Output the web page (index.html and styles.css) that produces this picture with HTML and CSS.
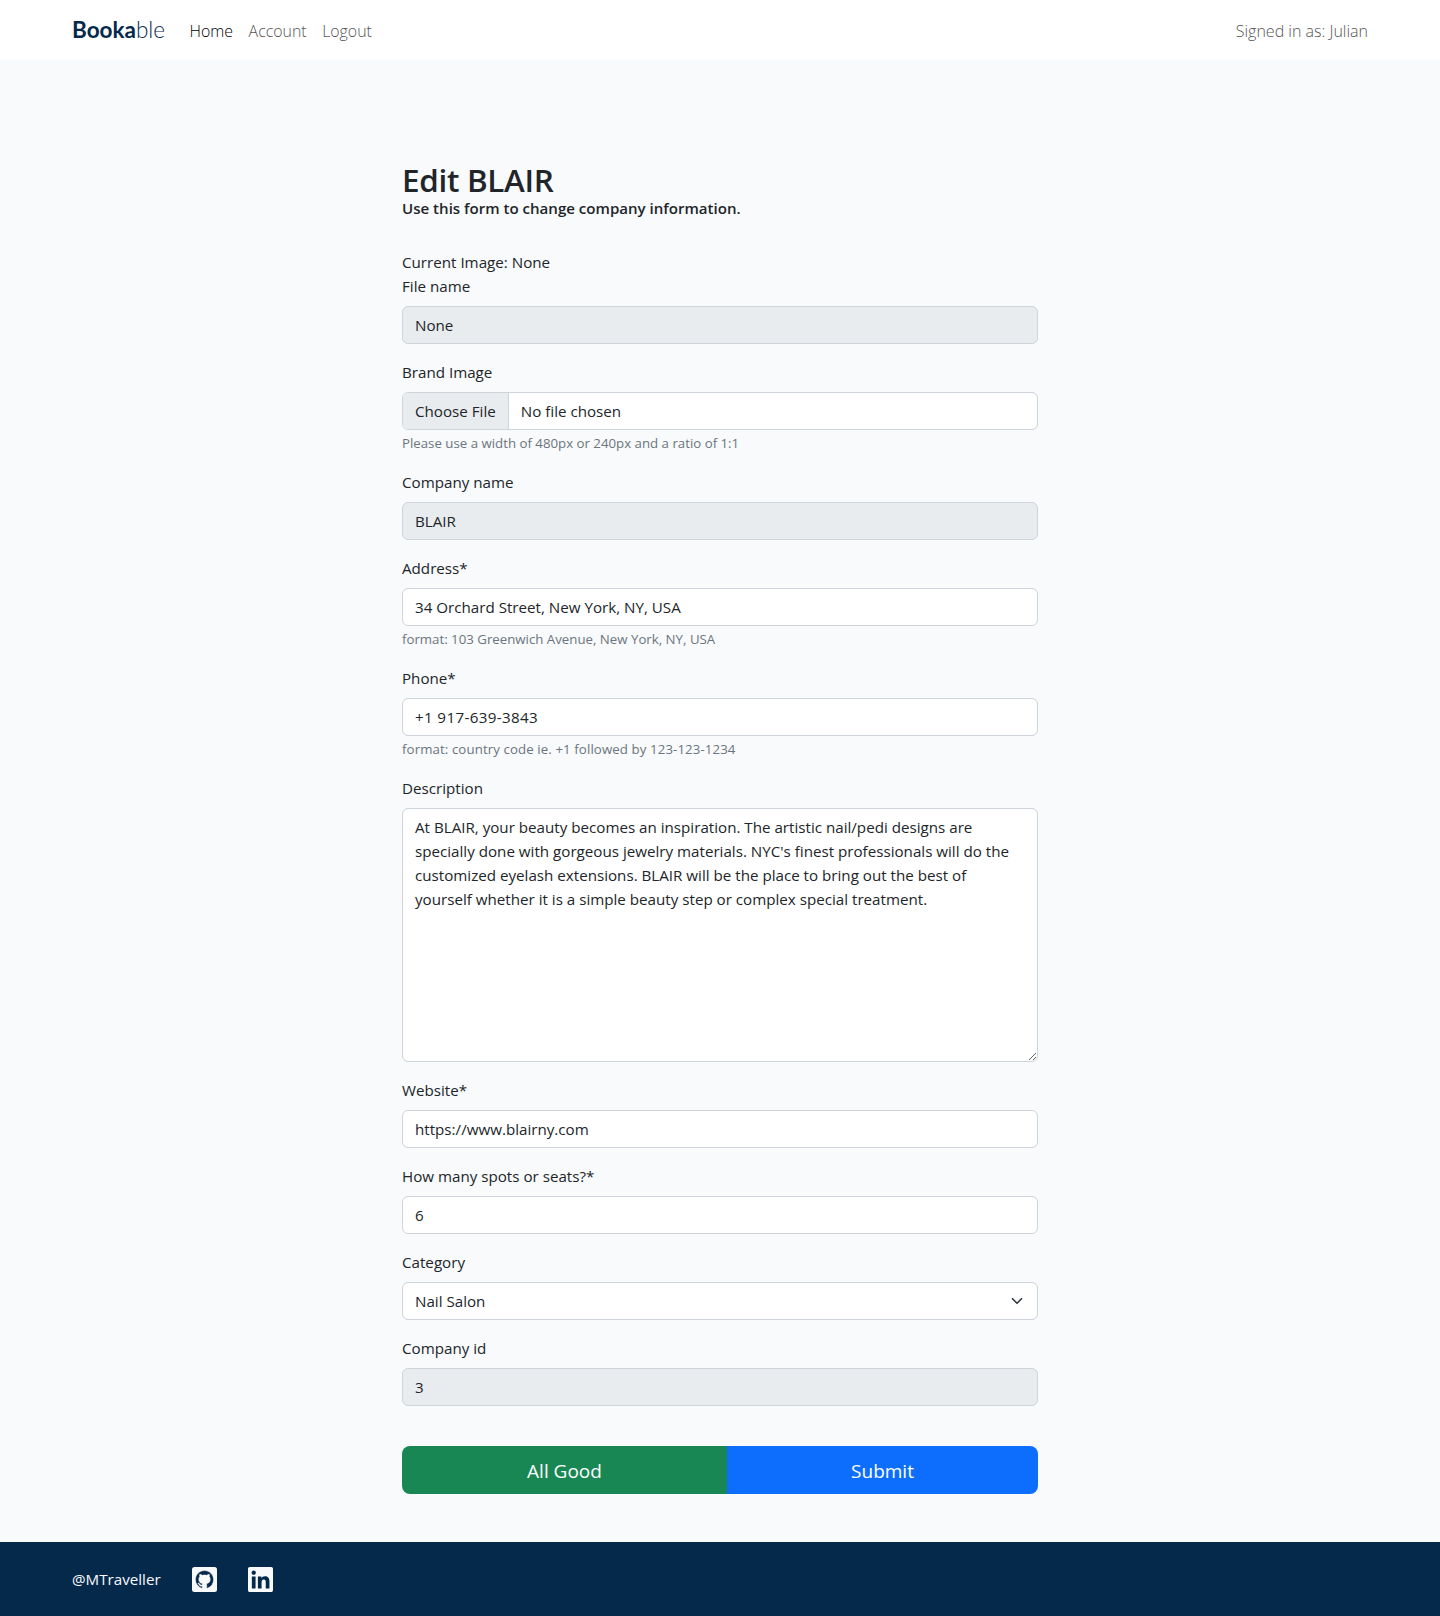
FILE: index.html
```html
<!DOCTYPE html>
<html lang="en">
<head>
<meta charset="utf-8">
<title>Bookable</title>
<link rel="stylesheet" href="styles.css">
</head>
<body>
<header class="navbar">
  <a class="brand" href="#"><b>Booka</b><span>ble</span></a>
  <nav class="nav-links">
    <a class="active" href="#">Home</a>
    <a href="#">Account</a>
    <a href="#">Logout</a>
  </nav>
  <span class="signed-in">Signed in as: Julian</span>
</header>
<main class="content">
  <h1>Edit BLAIR</h1>
  <p class="subtitle">Use this form to change company information.</p>
  <form class="form">
    <p class="current">Current Image: None</p>
    <div class="field">
      <label for="file-name">File name</label>
      <input class="control" id="file-name" type="text" value="None" disabled>
    </div>
    <div class="field">
      <label for="brand-image">Brand Image</label>
      <input class="control" id="brand-image" type="file">
      <small>Please use a width of 480px or 240px and a ratio of 1:1</small>
    </div>
    <div class="field">
      <label for="company">Company name</label>
      <input class="control" id="company" type="text" value="BLAIR" disabled>
    </div>
    <div class="field">
      <label for="address">Address*</label>
      <input class="control" id="address" type="text" value="34 Orchard Street, New York, NY, USA">
      <small>format: 103 Greenwich Avenue, New York, NY, USA</small>
    </div>
    <div class="field">
      <label for="phone">Phone*</label>
      <input class="control phone" id="phone" type="text" value="+1 917-639-3843">
      <small class="phone-hint">format: country code ie. +1 followed by 123-123-1234</small>
    </div>
    <div class="field">
      <label for="description">Description</label>
      <textarea class="control description" id="description">At BLAIR, your beauty becomes an inspiration. The artistic nail/pedi designs are specially done with gorgeous jewelry materials. NYC's finest professionals will do the customized eyelash extensions. BLAIR will be the place to bring out the best of yourself whether it is a simple beauty step or complex special treatment.</textarea>
    </div>
    <div class="field">
      <label for="website">Website*</label>
      <input class="control" id="website" type="text" value="https://www.blairny.com">
    </div>
    <div class="field">
      <label for="seats">How many spots or seats?*</label>
      <input class="control" id="seats" type="text" value="6">
    </div>
    <div class="field">
      <label for="category">Category</label>
      <select class="control select" id="category"><option>Nail Salon</option></select>
    </div>
    <div class="field">
      <label for="company-id">Company id</label>
      <input class="control" id="company-id" type="text" value="3" disabled>
    </div>
    <div class="buttons">
      <button class="btn success" type="button">All Good</button>
      <button class="btn primary" type="button">Submit</button>
    </div>
  </form>
</main>
<footer class="footer">
  <span class="handle">@MTraveller</span>
  <a class="social" href="#" aria-label="GitHub"><svg viewBox="0 0 25 25"><rect width="25" height="25" rx="2.5" fill="#f8fafc"/><path fill="#04294b" stroke="#f8fafc" stroke-width=".4" transform="translate(3.5 3.6) scale(1.125)" d="M8 0C3.58 0 0 3.58 0 8c0 3.54 2.29 6.53 5.47 7.59.4.07.55-.17.55-.38 0-.19-.01-.82-.01-1.49-2.01.37-2.53-.49-2.69-.94-.09-.23-.48-.94-.82-1.13-.28-.15-.68-.52-.01-.53.63-.01 1.08.58 1.23.82.72 1.21 1.87.87 2.33.66.07-.52.28-.87.51-1.07-1.78-.2-3.64-.89-3.64-3.95 0-.87.31-1.59.82-2.15-.08-.2-.36-1.02.08-2.12 0 0 .67-.21 2.2.82.64-.18 1.32-.27 2-.27.68 0 1.36.09 2 .27 1.53-1.04 2.2-.82 2.2-.82.44 1.1.16 1.92.08 2.12.51.56.82 1.27.82 2.15 0 3.07-1.87 3.75-3.65 3.95.29.25.54.73.54 1.48 0 1.07-.01 1.93-.01 2.2 0 .21.15.46.55.38A8.013 8.013 0 0016 8c0-4.42-3.58-8-8-8z"/></svg></a>
  <a class="social" href="#" aria-label="LinkedIn"><svg viewBox="0 32 448 448"><path fill="#f8fafc" d="M416 32H31.9C14.3 32 0 46.5 0 64.3v383.4C0 465.5 14.3 480 31.9 480H416c17.6 0 32-14.5 32-32.3V64.3c0-17.8-14.4-32.3-32-32.3zM135.4 416H69V202.2h66.5V416zm-33.2-243c-21.3 0-38.5-17.3-38.5-38.5S80.9 96 102.2 96c21.2 0 38.5 17.3 38.5 38.5 0 21.3-17.2 38.5-38.5 38.5zm282.1 243h-66.4V312c0-24.8-.5-56.7-34.5-56.7-34.6 0-39.9 27-39.9 54.9V416h-66.4V202.2h63.7v29.2h.9c8.9-16.8 30.6-34.5 62.9-34.5 67.2 0 79.7 44.3 79.7 101.9V416z"/></svg></a>
</footer>
</body>
</html>
```
FILE: styles.css
```css
* { box-sizing: border-box; }
body {
  margin: 0;
  min-height: 1616px;
  display: flex;
  flex-direction: column;
  background: #f8fafc;
  color: #212529;
  font: 400 15.16px/24px "Open Sans", sans-serif;
}
a { color: inherit; text-decoration: none; }
.navbar {
  height: 60px;
  padding: 0 72px;
  display: flex;
  align-items: center;
  background: #fff;
}
.brand { font: 22.5px/30px Lato, sans-serif; color: #04294b; margin-right: 24.5px; }
.brand b { font-weight: 700; }
.brand span { font-weight: 300; }
.nav-links { display: flex; gap: 15.5px; padding-top: 1px; font-size: 15.9px; font-weight: 300; color: #555; }
.nav-links .active { color: #000; }
.signed-in { margin-left: auto; padding-top: 1px; font-size: 16px; font-weight: 300; color: #555; }
.content { width: 636px; margin: 0 auto; padding-top: 101px; flex: 1; }
h1 { margin: 0; font-size: 31.4px; line-height: 38px; font-weight: 550; letter-spacing: -0.3px; }
.subtitle { margin: 0; line-height: 19px; font-weight: 600; font-size: 15.07px; }
.form { margin-top: 32px; }
.current { margin: 0; }
.field { margin-bottom: 16px; display: flex; flex-direction: column; }
.field label { margin-bottom: 8px; }
.field small { margin: 3px 0 1px; font-size: 13.25px; line-height: 20px; color: #6c757d; }
.field .phone-hint { letter-spacing: 0.1px; }
.control {
  width: 100%;
  height: 38px;
  padding: 6px 12px;
  border: 1px solid #ced4da;
  border-radius: 6px;
  background: #fff;
  color: #212529;
  font: inherit;
  appearance: none;
}
.control:disabled { background: #e9ecef; opacity: 1; }
.control::file-selector-button {
  height: 36px;
  margin: -6px 12px -6px -12px;
  padding: 6px 12px;
  border: 0;
  border-right: 1px solid #ced4da;
  background: #e9ecef;
  color: #212529;
  font: inherit;
}
.phone { letter-spacing: 0.36px; }
.description { height: 254px; resize: vertical; }
.select {
  background: #fff url("data:image/svg+xml,%3csvg xmlns='http://www.w3.org/2000/svg' viewBox='0 0 16 16'%3e%3cpath fill='none' stroke='%23343a40' stroke-linecap='round' stroke-linejoin='round' stroke-width='2.2' d='m2 5 6 6 6-6'/%3e%3c/svg%3e") no-repeat right 12px center / 16px 12px;
}
.buttons { margin-top: 40px; display: flex; }
.btn {
  height: 48px;
  padding: 1px 0 0;
  border: 0;
  color: #fff;
  font: 400 19px/30px "Open Sans", sans-serif;
}
.success { width: 325px; background: #198754; border-radius: 8px 0 0 8px; }
.primary { flex: 1; background: #0d6efd; border-radius: 0 8px 8px 0; }
.footer {
  height: 74px;
  padding: 0 72px;
  display: flex;
  align-items: center;
  background: #04294b;
  color: #f8fafc;
}
.handle { width: 120px; }
.social { width: 25px; height: 25px; margin-right: 31px; }
.social svg { display: block; width: 25px; height: 25px; }
```
